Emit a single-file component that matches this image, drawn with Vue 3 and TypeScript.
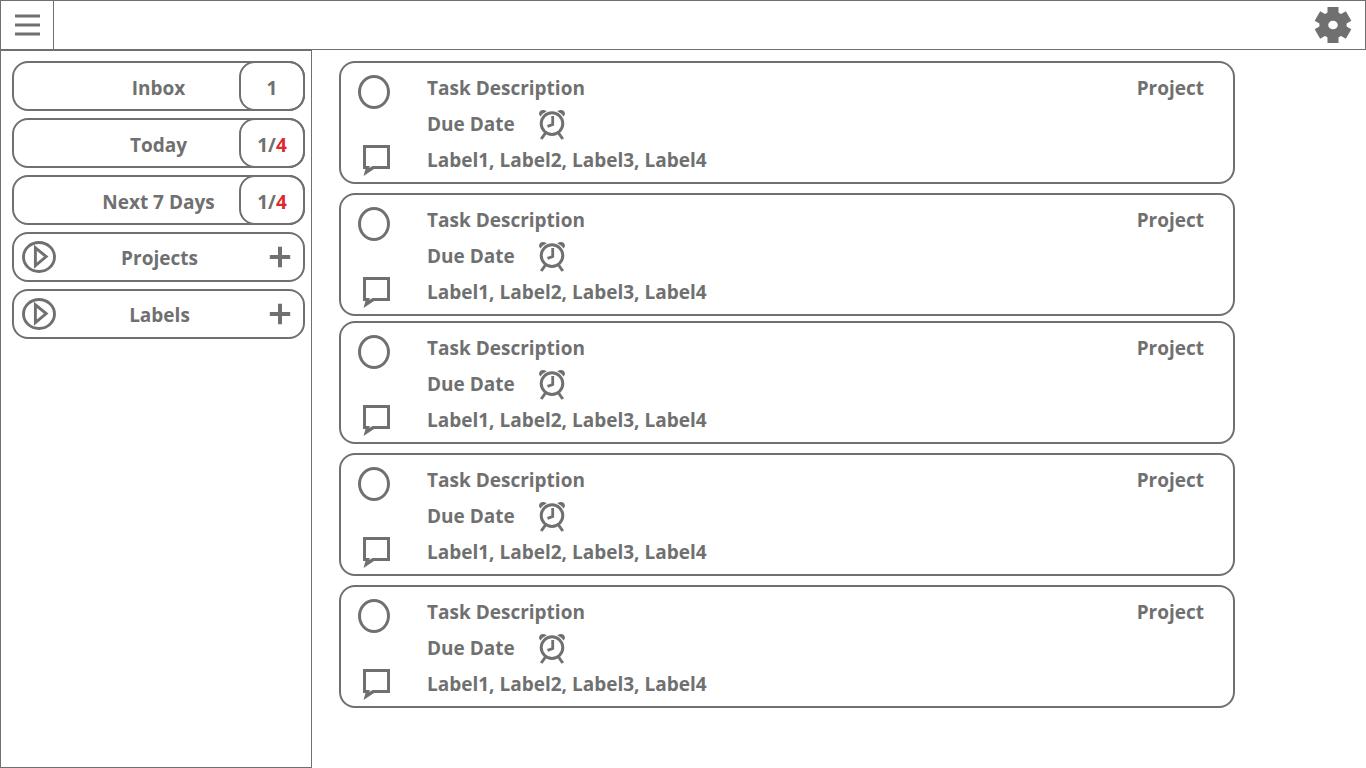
<script setup lang="ts">
import { ref } from 'vue'

interface Filter {
  name: string
  open: number
  overdue?: number
}

interface Task {
  id: number
  description: string
  due: string
  labels: string[]
  project: string
  done: boolean
}

const filters: Filter[] = [
  { name: 'Inbox', open: 1 },
  { name: 'Today', open: 1, overdue: 4 },
  { name: 'Next 7 Days', open: 1, overdue: 4 },
]

const sections: string[] = ['Projects', 'Labels']

const makeTask = (id: number): Task => ({
  id,
  description: 'Task Description',
  due: 'Due Date',
  labels: ['Label1', 'Label2', 'Label3', 'Label4'],
  project: 'Project',
  done: false,
})

const groups = ref<Task[][]>([[1, 2].map(makeTask), [3, 4, 5].map(makeTask)])
</script>

<template>
  <div class="app">
    <header class="topbar">
      <button class="menu" type="button" aria-label="Menu">
        <svg width="26" height="22" viewBox="0 0 26 22">
          <path d="M1 2H26M1 11H26M1 20H26" stroke="currentColor" stroke-width="2.8" />
        </svg>
      </button>
      <button class="settings" type="button" aria-label="Settings">
        <svg width="38" height="36" viewBox="-19 -18 38 36">
          <g fill="currentColor">
            <rect x="-5.5" y="-18" width="11" height="36" />
            <rect x="-5.5" y="-18" width="11" height="36" transform="rotate(60)" />
            <rect x="-5.5" y="-18" width="11" height="36" transform="rotate(120)" />
            <circle r="13.6" />
          </g>
          <ellipse rx="4.8" ry="4.3" fill="#fff" />
        </svg>
      </button>
    </header>

    <div class="body">
      <nav class="sidebar">
        <button v-for="f in filters" :key="f.name" class="row filter" type="button">
          <span class="name">{{ f.name }}</span>
          <span class="count">{{ f.open }}<template v-if="f.overdue">/<span class="overdue">{{ f.overdue }}</span></template></span>
        </button>
        <div v-for="s in sections" :key="s" class="row section">
          <button class="expand" type="button" :aria-label="`Expand ${s}`">
            <svg width="34" height="32" viewBox="0 0 34 32">
              <g fill="none" stroke="currentColor" stroke-width="2.9">
                <ellipse cx="17" cy="16" rx="15.5" ry="14.5" />
                <path d="M13.4 6.8V24.6L24.2 15.6Z" />
              </g>
            </svg>
          </button>
          <span class="name">{{ s }}</span>
          <button class="add" type="button" :aria-label="`Add to ${s}`">
            <svg width="22" height="22" viewBox="0 0 22 22">
              <path d="M11 0.8V21.2M0.8 11H21.2" stroke="currentColor" stroke-width="4" />
            </svg>
          </button>
        </div>
      </nav>

      <main class="tasks">
        <section v-for="(group, g) in groups" :key="g" class="group">
          <article v-for="task in group" :key="task.id" class="card">
            <div class="tools">
              <input v-model="task.done" class="done" type="checkbox" :aria-label="`Complete task ${task.id}`" />
              <button class="comment" type="button" aria-label="Comments">
                <svg width="28" height="33" viewBox="0 0 28 33">
                  <path d="M1.5 23V1.5H25.5V22.5H10L5 25.5" fill="none" stroke="currentColor" stroke-width="3" />
                  <path d="M0 21H7L6 23L9 22.5L11 24L0.5 31L2.5 24H0Z" fill="currentColor" />
                </svg>
              </button>
            </div>
            <div class="details">
              <div>{{ task.description }}</div>
              <div class="due">
                <span>{{ task.due }}</span>
                <button class="alarm" type="button" aria-label="Reminder">
                  <svg width="28" height="32" viewBox="0 -2 28 32">
                    <g fill="none" stroke="currentColor">
                      <circle cx="14" cy="13.6" r="10.8" stroke-width="3" />
                      <path d="M14.7 6V14.6L9.5 16.4" stroke-width="2.8" />
                      <path d="M7.5 23L3.2 29M20.5 23L24.8 29" stroke-width="3" />
                    </g>
                    <path d="M2.6 6.4C-0.6 3.8 1.6 0 5 0C6.6 0 7.8 0.5 8.6 1.5C6 2.6 4 4.2 2.6 6.4Z" fill="currentColor" />
                    <path d="M25.4 6.4C28.6 3.8 26.4 0 23 0C21.4 0 20.2 0.5 19.4 1.5C22 2.6 24 4.2 25.4 6.4Z" fill="currentColor" />
                  </svg>
                </button>
              </div>
              <div>{{ task.labels.join(', ') }}</div>
            </div>
            <div class="project">{{ task.project }}</div>
          </article>
        </section>
      </main>
    </div>
  </div>
</template>

<style>
body {
  margin: 0;
  background: #fff;
}
</style>

<style scoped>
.app {
  display: flex;
  flex-direction: column;
  min-height: 100vh;
  color: #707070;
  font: 700 19px/36px 'Open Sans', 'Noto Sans', sans-serif;
}

.app *,
.app {
  box-sizing: border-box;
}

button {
  margin: 0;
  padding: 0;
  border: 0;
  background: none;
  color: inherit;
  font: inherit;
  cursor: pointer;
}

svg {
  display: block;
}

.topbar {
  display: flex;
  justify-content: space-between;
  height: 50px;
  border: 1px solid #707070;
}

.menu {
  display: grid;
  place-items: center;
  width: 53px;
  border-right: 1px solid #707070;
}

.settings {
  display: grid;
  place-items: center;
  padding: 0 13px;
}

.body {
  display: flex;
  flex: 1;
}

.sidebar {
  display: flex;
  flex-direction: column;
  gap: 7px;
  flex: 0 0 312px;
  padding: 10px 6px 10px 11px;
  border: 1px solid #707070;
}

.row {
  display: grid;
  grid-template-columns: 62px 1fr 62px;
  align-items: center;
  height: 50px;
  border: 2px solid #707070;
  border-radius: 16px;
}

.name {
  grid-column: 2;
  padding-top: 2px;
  text-align: center;
  white-space: nowrap;
}

.filter .name {
  padding-top: 4px;
}

.section .name {
  padding-left: 2px;
}

.count {
  height: 50px;
  margin: -2px;
  padding-top: 7px;
  border: 2px solid #707070;
  border-radius: 16px;
  text-align: center;
}

.overdue {
  color: #dc2a2e;
}

.expand {
  justify-self: start;
  margin-left: 8px;
}

.add {
  justify-self: end;
  margin-right: 12px;
}

.tasks {
  display: flex;
  flex: 1;
  flex-direction: column;
  gap: 5px;
  min-width: 0;
  padding: 11px 131px 11px 27px;
}

.group {
  display: flex;
  flex-direction: column;
  gap: 9px;
}

.card {
  display: flex;
  padding: 7px 29px 4px 17px;
  border: 2px solid #707070;
  border-radius: 16px;
}

.tools {
  display: flex;
  flex-direction: column;
  align-items: center;
  justify-content: space-between;
  width: 32px;
  margin-right: 37px;
  padding-top: 5px;
}

.done {
  width: 32px;
  height: 34px;
  margin: 0;
  border: 3px solid #707070;
  border-radius: 50%;
  appearance: none;
  cursor: pointer;
}

.done:checked {
  background: #707070;
}

.comment {
  margin-left: 5px;
}

.details {
  flex: 1;
}

.due {
  display: flex;
  align-items: center;
  gap: 23px;
}
</style>
